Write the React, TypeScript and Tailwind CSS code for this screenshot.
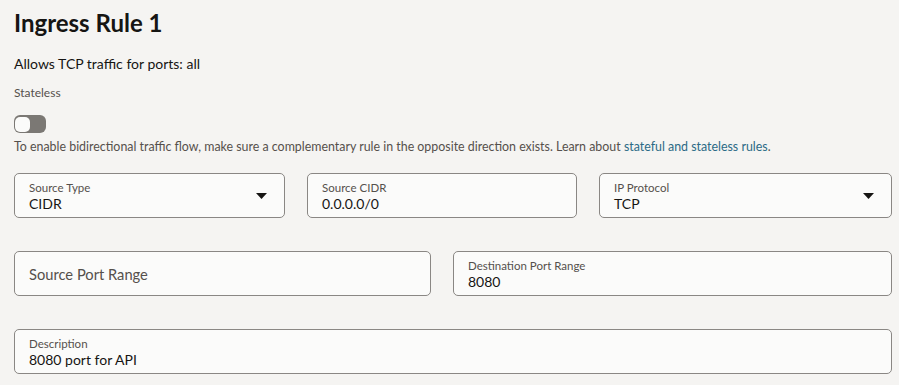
import type { ReactNode } from 'react';

const font = { fontFamily: 'Lato, "Noto Sans", "Liberation Sans", sans-serif' };

function Caret() {
  return (
    <svg width="11" height="6" viewBox="0 0 11 6" className="shrink-0">
      <path d="M0 0h11L5.5 6z" fill="#161513" />
    </svg>
  );
}

function Field({
  label,
  value,
  select,
}: {
  label: string;
  value?: string;
  select?: boolean;
}) {
  return (
    <div className="flex h-[45px] items-center rounded-[5px] border border-[#8a8784] bg-[#fbfbfa] pl-[14px] pr-[17px]">
      {value === undefined ? (
        <span className="text-[14.7px] leading-[20px] text-[#55504c]">{label}</span>
      ) : (
        <div className="flex min-w-0 flex-1 flex-col pt-[1px]">
          <span className="text-[11.5px] leading-[15px] text-[#55504c]">{label}</span>
          <span className="text-[14px] leading-[18px] text-[#161513]">{value}</span>
        </div>
      )}
      {select && <Caret />}
    </div>
  );
}

function Toggle() {
  return (
    <div className="flex h-[18px] w-[32px] items-center rounded-[6px] bg-[#7b7874] px-[1px]">
      <div className="h-[15px] w-[15px] rounded-[5px] bg-[#fbfbfa]" />
    </div>
  );
}

function Row({ cols, children }: { cols: string; children: ReactNode }) {
  return <div className={`grid gap-[22px] ${cols}`}>{children}</div>;
}

export default function App() {
  return (
    <div className="min-h-screen bg-[#f5f4f2] pl-[14px] pr-[7px] pt-[6px] text-[#161513]" style={font}>
      <h1 className="text-[24px] font-bold leading-[34px]">Ingress Rule 1</h1>
      <p className="mt-[14px] text-[14px] leading-[20px]">Allows TCP traffic for ports: all</p>
      <p className="mt-[11px] text-[12px] leading-[16px] text-[#55504c]">Stateless</p>
      <div className="mt-[14px]">
        <Toggle />
      </div>
      <p className="mt-[6px] text-[12.4px] leading-[16px] text-[#55504c]">
        To enable bidirectional traffic flow, make sure a complementary rule in the opposite direction exists. Learn about{' '}
        <span className="text-[#2b6a86]">stateful and stateless rules</span>.
      </p>
      <div className="mt-[18px] flex flex-col gap-[33px]">
        <Row cols="grid-cols-[271px_270px_1fr]">
          <Field label="Source Type" value="CIDR" select />
          <Field label="Source CIDR" value="0.0.0.0/0" />
          <Field label="IP Protocol" value="TCP" select />
        </Row>
        <Row cols="grid-cols-[417px_1fr]">
          <Field label="Source Port Range" />
          <Field label="Destination Port Range" value="8080" />
        </Row>
        <Row cols="grid-cols-1">
          <Field label="Description" value="8080 port for API" />
        </Row>
      </div>
    </div>
  );
}
